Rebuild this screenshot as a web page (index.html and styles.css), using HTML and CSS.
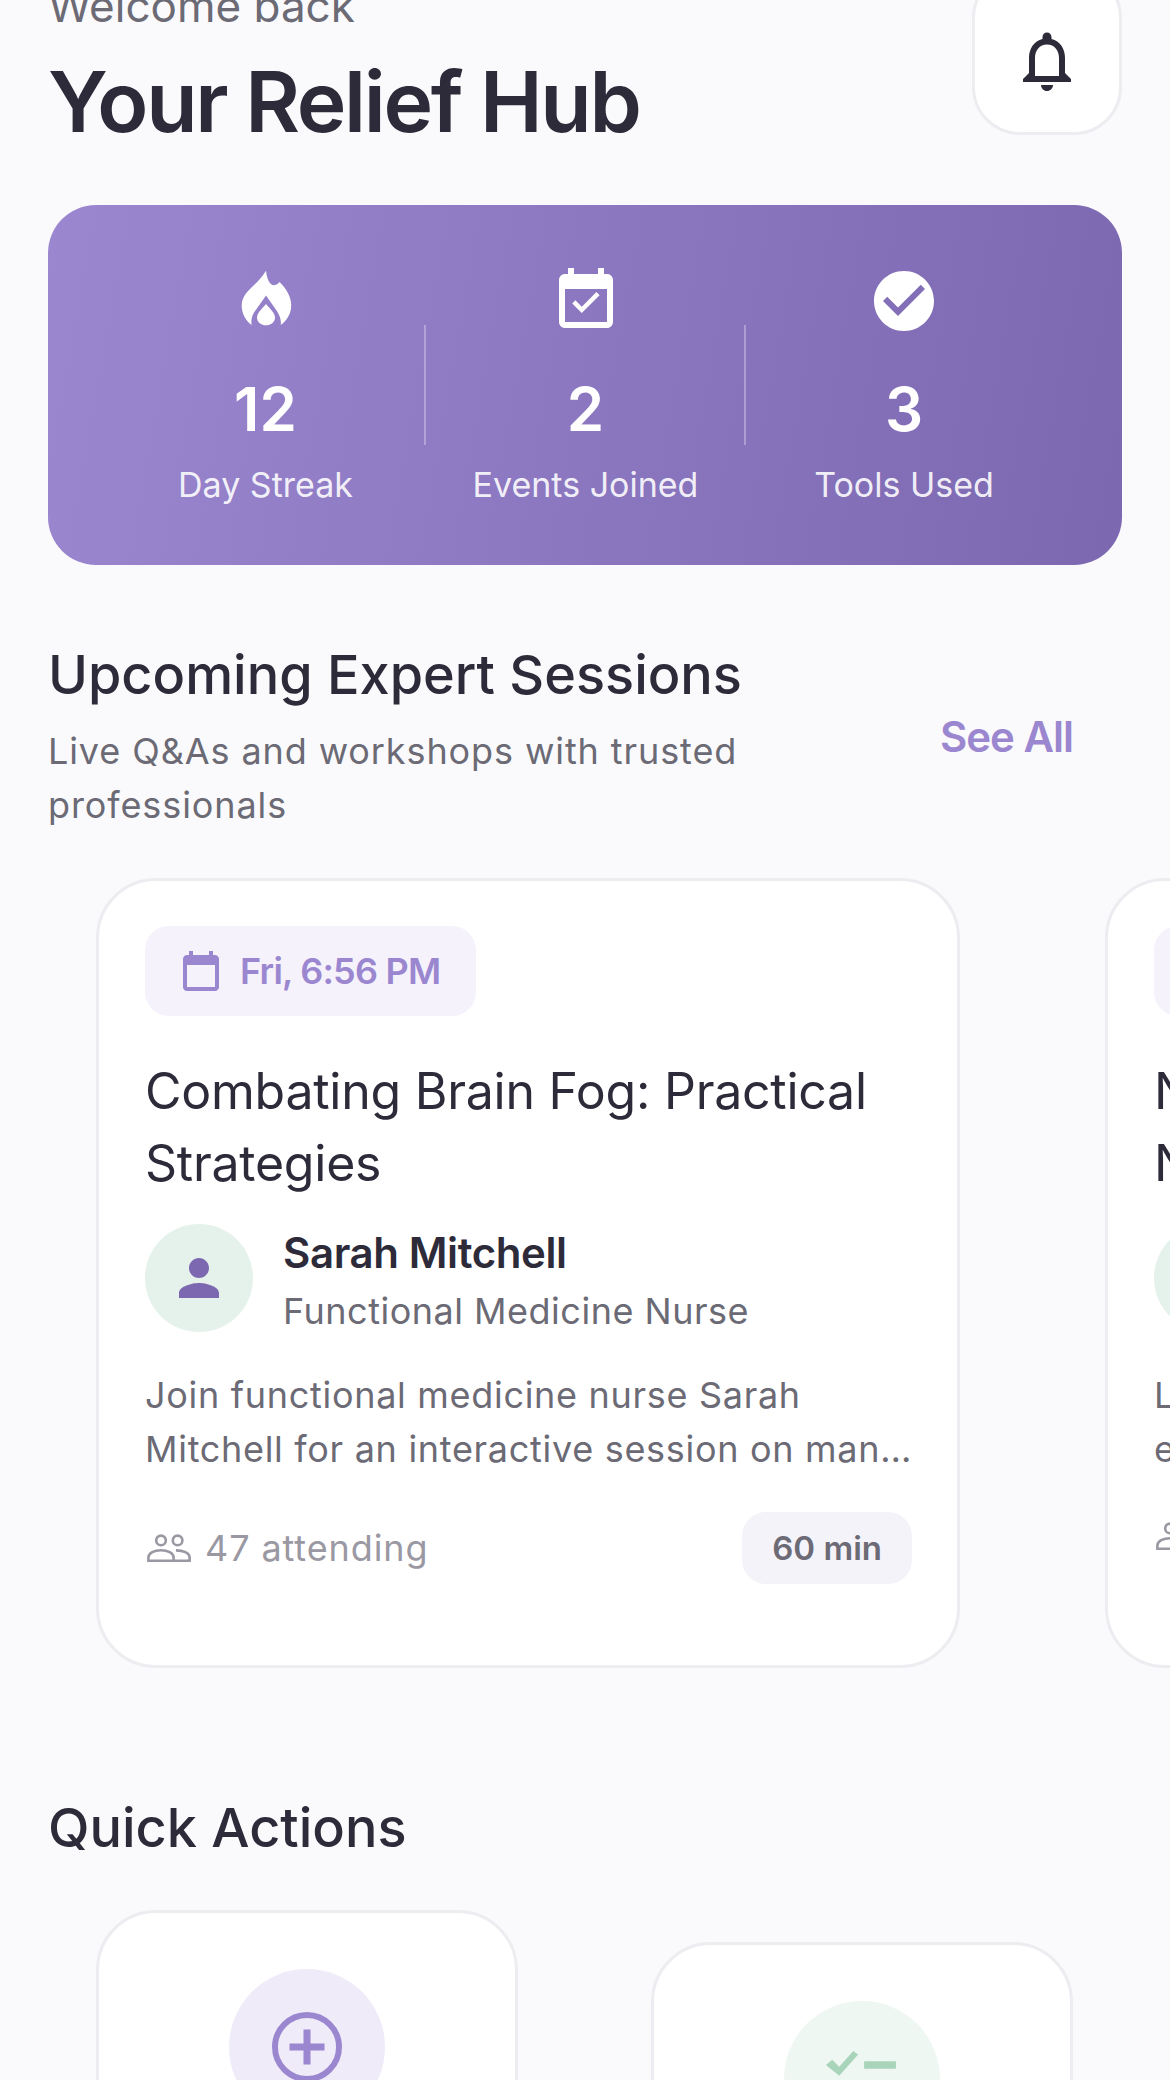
FILE: index.html
```html
<!DOCTYPE html>
<html lang="en">
<head>
<meta charset="utf-8">
<title>Your Relief Hub</title>
<link rel="stylesheet" href="styles.css">
</head>
<body>
<main class="page">
  <header class="top">
    <div class="top-text">
      <p class="welcome">Welcome back</p>
      <h1 class="hub">Your Relief Hub</h1>
    </div>
    <button class="bell" aria-label="Notifications">
      <svg viewBox="0 0 24 24" width="72" height="72"><path fill="#2d2b3a" d="M12 22c1.1 0 2-.9 2-2h-4c0 1.1.9 2 2 2zm6-6v-5c0-3.07-1.63-5.64-4.5-6.32V4c0-.83-.67-1.5-1.5-1.500s-1.500.67-1.500 1.500v.68C7.640 5.360 6 7.920 6 11v5l-2 2v1h16v-1l-2-2zm-2 1H8v-6c0-2.480 1.510-4.500 4-4.500s4 2.020 4 4.500v6z"/></svg>
    </button>
  </header>

  <section class="stats">
    <div class="stat">
      <svg class="stat-icon" viewBox="0 0 24 24" width="72" height="72"><g fill="#fff" transform="translate(.2 -.7)"><path d="M11.800 2.600C12 4.500 12.400 6 13.400 7C14.400 7.800 15.600 7.400 16.300 6.400C18.600 8.600 20.200 11.300 20.200 14.200C20.200 16.800 18.800 19.200 16.700 20.700C17 18.800 16.200 17.200 15.200 15.700L11.800 10.900L8.400 15.700C7.200 17.200 6.700 18.800 7 20.700C5 19.200 3.700 16.800 3.700 14.200C3.700 9.500 9 7.500 11.800 2.600Z"/><path d="M11.800 13.700C13 15.200 14.800 16.600 14.800 18.200C14.800 19.800 13.400 20.800 11.800 20.800C10.200 20.800 8.800 19.800 8.800 18.200C8.800 16.600 10.600 15.200 11.800 13.700Z"/></g></svg>
      <span class="num">12</span>
      <span class="lab">Day Streak</span>
    </div>
    <div class="stat stat-rule">
      <svg class="stat-icon" viewBox="0 0 24 24" width="72" height="72"><path fill="#fff" d="M19 3h-1V1h-2v2H8V1H6v2H5c-1.110 0-2 .9-2 2v14c0 1.100.89 2 2 2h14c1.100 0 2-.9 2-2V5c0-1.100-.9-2-2-2zm0 16H5V8h14v11zm-2.470-8.940-1.060-1.060-4.880 4.880-2.120-2.120-1.060 1.060 3.180 3.180z"/></svg>
      <span class="num">2</span>
      <span class="lab">Events Joined</span>
    </div>
    <div class="stat stat-rule">
      <svg class="stat-icon" viewBox="0 0 24 24" width="72" height="72"><path fill="#fff" d="M12 2C6.480 2 2 6.480 2 12s4.480 10 10 10 10-4.480 10-10S17.520 2 12 2zm-2 15-5-5 1.410-1.410L10 14.170l7.590-7.590L19 8l-9 9z"/></svg>
      <span class="num">3</span>
      <span class="lab">Tools Used</span>
    </div>
  </section>

  <section class="sessions">
    <div class="sec-head">
      <div class="sec-text">
        <h2 class="sec-title">Upcoming Expert Sessions</h2>
        <p class="sec-sub">Live Q&amp;As and workshops with trusted professionals</p>
      </div>
      <a class="see-all">See All</a>
    </div>
    <div class="rail">
      <article class="card">
        <div class="pill">
          <svg viewBox="0 0 24 24" width="48" height="48"><path fill="#9b87d0" d="M19 4h-1V2h-2v2H8V2H6v2H5c-1.110 0-2 .9-2 2v14c0 1.100.89 2 2 2h14c1.100 0 2-.9 2-2V6c0-1.100-.9-2-2-2zm0 16H5V9h14v11z"/></svg>
          <span>Fri, 6:56 PM</span>
        </div>
        <h3 class="card-title">Combating Brain Fog: Practical Strategies</h3>
        <div class="host">
          <div class="avatar"><svg viewBox="0 0 24 24" width="60" height="60"><path fill="#7c68b0" d="M12 12c2.200 0 4-1.800 4-4s-1.800-4-4-4-4 1.800-4 4 1.800 4 4 4zm0 2c-2.700 0-8 1.300-8 4v2h16v-2c0-2.700-5.300-4-8-4z"/></svg></div>
          <div class="host-text">
            <div class="host-name">Sarah Mitchell</div>
            <div class="host-role">Functional Medicine Nurse</div>
          </div>
        </div>
        <p class="desc">
          <span class="desc-line">Join functional medicine nurse Sarah</span>
          <span class="desc-line">Mitchell for an interactive session on managing brain fog every day</span>
        </p>
        <div class="foot">
          <div class="att">
            <svg viewBox="0 0 24 24" width="48" height="48" fill="none" stroke="#9a98a3" stroke-width="1.300"><circle cx="8" cy="8.200" r="2.400"/><circle cx="16.300" cy="8.200" r="2.400"/><path d="M1.700 18.400v-1.600c0-2.300 3-3.700 6.300-3.700s6.300 1.400 6.300 3.700v1.600zM15.500 13.200c3.500 0 6.800 1.200 6.800 3.600v1.600h-8"/></svg>
            <span>47 attending</span>
          </div>
          <span class="dur">60 min</span>
        </div>
      </article>
      <article class="card">
        <div class="pill">
          <svg viewBox="0 0 24 24" width="48" height="48"><path fill="#9b87d0" d="M19 4h-1V2h-2v2H8V2H6v2H5c-1.110 0-2 .9-2 2v14c0 1.100.89 2 2 2h14c1.100 0 2-.9 2-2V6c0-1.100-.9-2-2-2zm0 16H5V9h14v11z"/></svg>
          <span>Sat, 5:30 PM</span>
        </div>
        <h3 class="card-title">Nutrition for Hormone<br>Navigation</h3>
        <div class="host">
          <div class="avatar"></div>
        </div>
        <p class="desc">
          <span class="desc-line">Learn practical nutrition</span>
          <span class="desc-line">essentials for every stage</span>
        </p>
        <div class="foot">
          <div class="att">
            <svg viewBox="0 0 24 24" width="48" height="48" fill="none" stroke="#9a98a3" stroke-width="1.300"><circle cx="8" cy="8.200" r="2.400"/><path d="M1.700 18.400v-1.600c0-2.300 3-3.700 6.300-3.700s6.300 1.400 6.300 3.700v1.600z"/></svg>
          </div>
        </div>
      </article>
    </div>
  </section>

  <section class="quick">
    <h2 class="sec-title">Quick Actions</h2>
    <div class="quick-grid">
      <div class="action">
        <div class="act-circle act-purple">
          <svg viewBox="0 0 24 24" width="84" height="84" fill="none" stroke="#9b87d0"><circle cx="12" cy="12" r="9.150" stroke-width="1.700"/><path d="M12 7v10M7 12h10" stroke-width="2"/></svg>
        </div>
      </div>
      <div class="action action-low">
        <div class="act-circle act-green">
          <svg viewBox="0 0 24 24" width="84" height="84"><path fill="#a8d5ba" d="M1.700 8L3.500 6.500L5.500 8.500L9.500 4L10.900 5L5.500 11.100zM12.600 6.900h9.100v2.200h-9.100z"/></svg>
        </div>
      </div>
    </div>
  </section>
</main>
</body>
</html>
```
FILE: styles.css
```css
* { box-sizing: border-box; }
html, body { margin: 0; padding: 0; }
body {
  width: 1170px;
  height: 2080px;
  overflow: hidden;
  background: #fafafc;
  font-family: Inter, "Noto Sans", sans-serif;
  color: #2d2b3a;
}
.page { margin-top: -30px; }
.top {
  display: flex;
  justify-content: space-between;
  align-items: flex-start;
  padding: 0 48px;
}
.top-text { padding-top: 8px; }
.welcome {
  margin: 0;
  font-size: 44px;
  line-height: 56px;
  color: #6b6a75;
}
.hub {
  margin: 26px 0 0;
  font-size: 84px;
  line-height: 84px;
  font-weight: 600;
  letter-spacing: -2.300px;
}
.bell {
  width: 150px;
  height: 165px;
  margin: 0;
  padding: 17px 0 0;
  background: #fff;
  border: 3px solid #ececf1;
  border-radius: 48px;
  display: flex;
  align-items: center;
  justify-content: center;
}
.stats {
  margin: 61px 48px 0;
  height: 360px;
  border-radius: 48px;
  background: linear-gradient(100deg, #9b87d0 0%, #7c68b0 100%);
  display: flex;
  padding: 60px 0 0 56px;
  color: #fff;
}
.stat {
  width: 320px;
  padding-left: 3px;
  display: flex;
  flex-direction: column;
  align-items: center;
  position: relative;
}
.stat:last-child { padding-left: 0; }
.stat-rule::before {
  content: "";
  position: absolute;
  left: 0;
  top: 60px;
  width: 2px;
  height: 120px;
  background: rgba(255,255,255,.3);
}
.num {
  margin-top: 30px;
  font-size: 60px;
  line-height: 84px;
  font-weight: 600;
}
.lab {
  margin-top: 12px;
  font-size: 34px;
  line-height: 44px;
  color: rgba(255,255,255,.9);
}
.sessions { margin-top: 75px; }
.sec-head {
  display: flex;
  align-items: center;
  justify-content: space-between;
  padding: 0 97px 0 48px;
}
.sec-text { width: 720px; }
.sec-title {
  margin: 0;
  font-size: 54px;
  line-height: 70px;
  font-weight: 500;
}
.sec-sub {
  margin: 14px 0 0;
  font-size: 36px;
  line-height: 54px;
  letter-spacing: .9px;
  color: #6b6a75;
}
.see-all {
  font-size: 42px;
  font-weight: 600;
  color: #9b87d0;
  letter-spacing: -1px;
}
.rail {
  display: flex;
  gap: 145px;
  margin-top: 46px;
  padding-left: 96px;
  overflow: hidden;
}
.card {
  flex: 0 0 864px;
  min-width: 0;
  height: 790px;
  padding: 45px 45px 45px 46px;
  background: #fff;
  border: 3px solid #ececf1;
  border-radius: 60px;
}
.pill {
  display: inline-flex;
  align-items: center;
  gap: 15px;
  height: 90px;
  padding: 0 36px 0 32px;
  background: #f5f2fc;
  border-radius: 24px;
  color: #9b87d0;
  font-size: 36px;
  font-weight: 600;
  letter-spacing: -.8px;
}
.card-title {
  margin: 39px 0 0;
  font-size: 50px;
  line-height: 72px;
  font-weight: 400;
  letter-spacing: -.25px;
}
.host {
  display: flex;
  align-items: flex-start;
  gap: 30px;
  height: 108px;
  margin-top: 25px;
}
.avatar {
  width: 108px;
  height: 108px;
  flex: none;
  border-radius: 50%;
  background: #e5f2eb;
  display: flex;
  align-items: center;
  justify-content: center;
}
.host-name {
  font-size: 42px;
  line-height: 58px;
  font-weight: 600;
  letter-spacing: -.4px;
}
.host-role {
  font-size: 36px;
  line-height: 59px;
  letter-spacing: .5px;
  color: #6b6a75;
}
.desc {
  margin: 36px 0 0;
  font-size: 36px;
  line-height: 54px;
  letter-spacing: .7px;
  color: #6b6a75;
}
.desc-line {
  display: block;
  white-space: nowrap;
  overflow: hidden;
  text-overflow: ellipsis;
}
.foot {
  display: flex;
  align-items: center;
  justify-content: space-between;
  margin-top: 36px;
}
.att {
  display: flex;
  align-items: center;
  gap: 12px;
  color: #9a98a3;
  font-size: 36px;
  letter-spacing: .9px;
}
.dur {
  height: 72px;
  padding: 0 30px;
  display: flex;
  align-items: center;
  border-radius: 24px;
  background: #f5f3fa;
  color: #6b6a75;
  font-size: 33px;
  font-weight: 600;
}
.quick { margin-top: 125px; padding-left: 48px; }
.quick-grid {
  display: flex;
  gap: 133px;
  margin-top: 47px;
  padding-left: 48px;
}
.action {
  width: 422px;
  height: 300px;
  background: #fff;
  border: 3px solid #ececf1;
  border-radius: 60px;
  padding-top: 56px;
  display: flex;
  justify-content: center;
  align-items: flex-start;
}
.action-low { margin-top: 32px; }
.act-circle {
  width: 156px;
  height: 156px;
  border-radius: 50%;
  display: flex;
  align-items: center;
  justify-content: center;
}
.act-purple { background: #efebf8; }
.act-green { background: #eff7f2; }
```
